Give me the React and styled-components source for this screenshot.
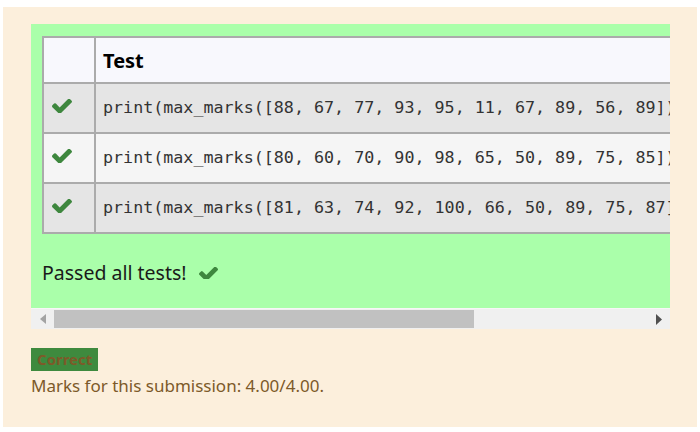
import React from "react";
import styled, { createGlobalStyle } from "styled-components";

const Global = createGlobalStyle`
  html, body { margin: 0; padding: 0; background: #ffffff; }
  body { font-family: "Noto Sans", "Open Sans", sans-serif; }
`;

const Outcome = styled.div`
  margin: 7px 3px 5px 3px;
  background: #fcefdc;
  padding: 17px 27px 26px 28px;
  color: #7d5a29;
`;

const ResultBox = styled.div`
  background: #aaffaa;
  overflow: hidden;
`;

const Inner = styled.div`
  padding: 12px 0 20px 11px;
  width: 900px;
`;

const Table = styled.table`
  border-collapse: collapse;
  border: 2px solid #ababab;
  width: 880px;
`;

const HeadCell = styled.th`
  background: #f8f8fd;
  border: 2px solid #ababab;
  height: 44px;
  padding: 0 7px;
  text-align: left;
  font-family: "Noto Sans", sans-serif;
  font-weight: 700;
  font-size: 20px;
  color: #000;
  width: ${(p) => (p.$narrow ? "34px" : "auto")};
`;

const Row = styled.tr`
  background: ${(p) => (p.$odd ? "#e5e5e5" : "#f5f5f5")};
`;

const IconCell = styled.td`
  border: 2px solid #ababab;
  height: 45px;
  padding: 0 0 3px 8px;
  width: 42px;
  vertical-align: middle;
`;

const CodeCell = styled.td`
  border: 2px solid #ababab;
  padding: 0 7px 2px 7px;
  vertical-align: middle;
  font-family: "DejaVu Sans Mono", monospace;
  font-size: 16.7px;
  color: #333;
  white-space: pre;
`;

const Passed = styled.p`
  margin: 24px 0 0 0;
  font-size: 19.5px;
  line-height: 30px;
  color: #1a1a1a;
  display: flex;
  align-items: center;
  gap: 12px;
`;

const ScrollBar = styled.div`
  height: 21px;
  background: #f0f0f0;
  border-top: 1px solid #f7f7f7;
  box-sizing: border-box;
  display: flex;
  align-items: center;
`;

const Arrow = styled.div`
  width: 23px;
  height: 20px;
  display: flex;
  align-items: center;
  justify-content: center;
  flex: none;
`;

const Track = styled.div`
  flex: 1;
  height: 18px;
  display: flex;
`;

const Thumb = styled.div`
  background: #c1c1c1;
  height: 18px;
`;

const Badge = styled.span`
  display: inline-block;
  margin-top: 19px;
  background: #3e8a3e;
  color: #7d5a29;
  font-weight: 700;
  font-size: 15px;
  line-height: 23px;
  padding: 0 6px;
`;

const Marks = styled.div`
  font-size: 17px;
  line-height: 30px;
  color: #7d5a29;
`;

const Check = ({ w = 20 }) => (
  <svg width={w} height={(w * 1060) / 1550} viewBox="121 366 1550 1060">
    <path
      fill="#3e873e"
      d="M1671 566q0 40-28 68l-724 724-136 136q-28 28-68 28t-68-28l-136-136-362-362q-28-28-28-68t28-68l136-136q28-28 68-28t68 28l294 295 656-657q28-28 68-28t68 28l136 136q28 28 28 68z"
    />
  </svg>
);

const tests = [
  "print(max_marks([88, 67, 77, 93, 95, 11, 67, 89, 56, 89]))",
  "print(max_marks([80, 60, 70, 90, 98, 65, 50, 89, 75, 85]))",
  "print(max_marks([81, 63, 74, 92, 100, 66, 50, 89, 75, 87]))",
];

export default function App() {
  return (
    <>
      <Global />
      <Outcome>
        <ResultBox>
          <Inner>
            <Table>
              <thead>
                <tr>
                  <HeadCell $narrow />
                  <HeadCell>Test</HeadCell>
                </tr>
              </thead>
              <tbody>
                {tests.map((t, i) => (
                  <Row key={i} $odd={i % 2 === 0}>
                    <IconCell>
                      <Check />
                    </IconCell>
                    <CodeCell>{t}</CodeCell>
                  </Row>
                ))}
              </tbody>
            </Table>
            <Passed>
              Passed all tests! <Check w={19} />
            </Passed>
          </Inner>
        </ResultBox>
        <ScrollBar>
          <Arrow>
            <svg width="6" height="10" viewBox="0 0 6 10">
              <path d="M6 0 L0 5 L6 10 Z" fill="#a3a3a3" />
            </svg>
          </Arrow>
          <Track>
            <Thumb style={{ width: "420px" }} />
          </Track>
          <Arrow>
            <svg width="6" height="11" viewBox="0 0 6 11">
              <path d="M0 0 L6 5.5 L0 11 Z" fill="#505050" />
            </svg>
          </Arrow>
        </ScrollBar>
        <Badge>Correct</Badge>
        <Marks>Marks for this submission: 4.00/4.00.</Marks>
      </Outcome>
    </>
  );
}
